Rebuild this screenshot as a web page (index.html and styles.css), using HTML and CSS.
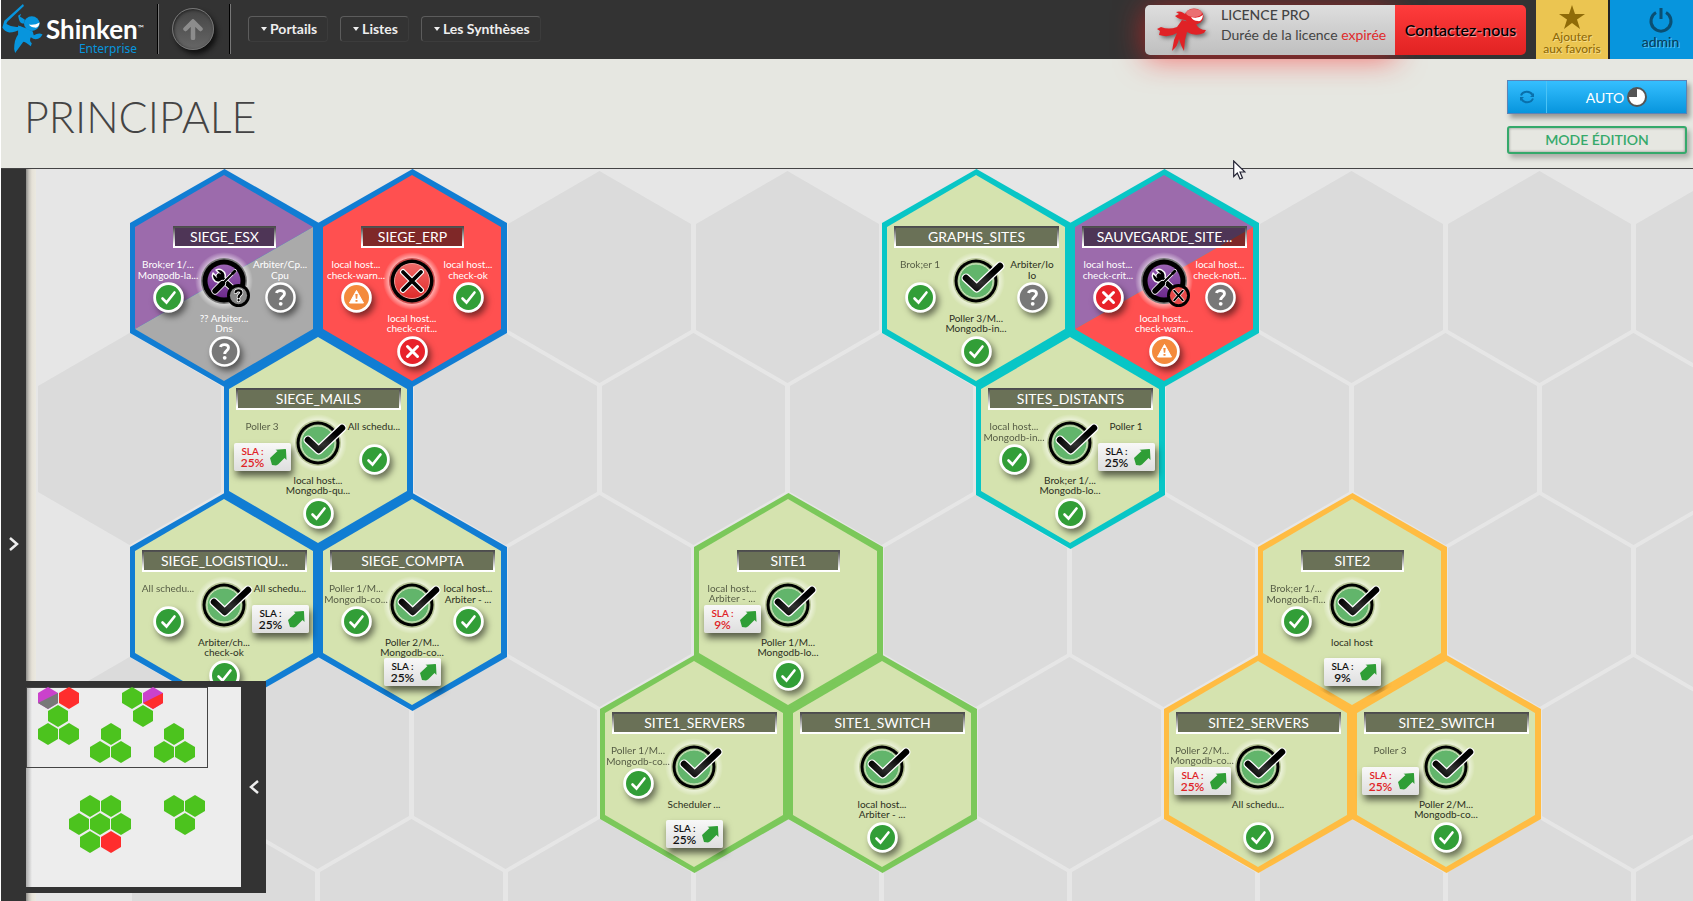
FILE: index.html
```html
<!DOCTYPE html>
<html lang="fr">
<head>
<meta charset="utf-8">
<title>Shinken Enterprise - Principale</title>
<link rel="stylesheet" href="styles.css">
</head>
<body>
<svg class="defs" aria-hidden="true">
  <defs>
    <radialGradient id="halo"><stop offset=".7" stop-color="#fff" stop-opacity=".75"/><stop offset="1" stop-color="#fff" stop-opacity="0"/></radialGradient>
    <radialGradient id="ink" cx=".45" cy=".75" r=".6"><stop offset="0" stop-color="#333"/><stop offset="1" stop-color="#000"/></radialGradient>
    <linearGradient id="red-disc" x1="0" y1="0" x2="0" y2="1"><stop offset="0" stop-color="#f06a68"/><stop offset="1" stop-color="#e02a2a"/></linearGradient>
    <linearGradient id="purple-disc" x1="0" y1="0" x2="0" y2="1"><stop offset="0" stop-color="#9a62b4"/><stop offset="1" stop-color="#6d2a8c"/></linearGradient>
  </defs>
  <symbol id="hex-base" viewBox="0 0 189 218"><path d="M94.5 0 189 54V164L94.5 218 0 164V54Z"/></symbol>
  <symbol id="hex-ok" viewBox="0 0 189 218"><use href="#hex-base"/><path fill="#d5e3af" d="M94 6 183 58V160L94 212 5 160V58Z"/></symbol>
  <symbol id="hex-critical" viewBox="0 0 189 218"><use href="#hex-base"/><path fill="#ff5050" d="M94 6 183 58V160L94 212 5 160V58Z"/></symbol>
  <symbol id="hex-down-unknown" viewBox="0 0 189 218"><use href="#hex-base"/><path fill="#9c6bac" d="M94 6 183 58 5 160V58Z"/><path fill="#aaa" d="M183 58V160L94 212 5 160Z"/></symbol>
  <symbol id="hex-down-critical" viewBox="0 0 189 218"><use href="#hex-base"/><path fill="#9c6bac" d="M94 6 183 58 5 160V58Z"/><path fill="#ff5050" d="M183 58V160L94 212 5 160Z"/></symbol>

  <symbol id="main-ok" viewBox="-30 -30 60 60">
    <circle r="29" fill="url(#halo)"/><circle r="23" fill="#b9c697"/><circle r="21.5"/><circle r="18.5" fill="#a5c58f"/>
    <circle r="17" fill="#62b56b" stroke="#cfe5c0" stroke-width="1"/>
    <path d="M-10-3 .7 7 24-15" fill="none" stroke="#fff" stroke-width="9" stroke-linecap="round" stroke-linejoin="round"/>
    <path d="M-10-3 .7 7 24-15" fill="none" stroke="url(#ink)" stroke-width="6.500" stroke-linecap="round" stroke-linejoin="round"/>
  </symbol>
  <symbol id="main-critical" viewBox="-30 -30 60 60">
    <circle r="29" fill="url(#halo)"/><circle r="23" fill="#c94a4a"/><circle r="21.5"/><circle r="17.5" fill="url(#red-disc)" stroke="#f29a98"/>
    <path d="M-9-9 9 9M9-9-9 9" stroke="#fff" stroke-width="6" stroke-linecap="round"/>
    <path d="M-9-9 9 9M9-9-9 9" stroke="#000" stroke-width="3.800" stroke-linecap="round"/>
  </symbol>
  <symbol id="main-tools" viewBox="-30 -30 60 60">
    <circle r="29" fill="url(#halo)"/><circle r="23" fill="#777"/><circle r="21.5"/><circle r="16.5" fill="url(#purple-disc)"/>
    <path d="M-5-5 9 8" stroke="#fff" stroke-width="6.500" stroke-linecap="round"/>
    <path d="M-11-8-7-4-4-7-8-11A6.500 6.500 0 1 1-11-8Z" stroke="#fff" stroke-width="1.500" stroke-linejoin="round"/>
    <path d="M-5-5 9 8" stroke="#000" stroke-width="5" stroke-linecap="round"/>
    <path d="M11-10 0 1" stroke="#fff" stroke-width="3.600" stroke-linecap="round"/>
    <path d="M-1.500 2.500-9 10" stroke="#fff" stroke-width="7" stroke-linecap="round"/>
    <path d="M11-10 0 1" stroke="#000" stroke-width="2" stroke-linecap="round"/>
    <path d="M11.500-10.500 8-7" stroke="#000" stroke-width="3"/>
    <path d="M-1.500 2.500-9 10" stroke="#000" stroke-width="5.400" stroke-linecap="round"/>
  </symbol>
  <symbol id="question" viewBox="-8 -9 16 18"><path d="M-4-4.500C-3.500-7.500 4-8 4-3.800 4-1 .2-.8.2 2.400" fill="none" stroke-width="2.800"/><circle cx=".2" cy="6.300" r="1.900" stroke="none"/></symbol>
  <symbol id="sub-unknown" viewBox="-12 -12 24 24"><circle r="12"/><circle r="9" fill="#888"/>
    <path d="M-3-3.500C-2.500-6 3-6.200 3-3 3-1 .1-.6.1 1.800M.1 4.800V5" fill="none" stroke="#fff" stroke-width="4" stroke-linecap="round"/>
    <path d="M-3-3.500C-2.500-6 3-6.200 3-3 3-1 .1-.6.1 1.800M.1 4.800V5" fill="none" stroke="#000" stroke-width="2.400" stroke-linecap="round"/></symbol>
  <symbol id="sub-critical" viewBox="-12 -12 24 24"><circle r="12"/><circle r="9" fill="#e84a4a"/><path d="M-4.500-5 4.500 5M4.500-5-4.500 5" stroke="#fff" stroke-width="3.200" stroke-linecap="round"/><path d="M-4.500-5 4.500 5M4.500-5-4.500 5" stroke="#000" stroke-width="2" stroke-linecap="round"/></symbol>

  <symbol id="ok" viewBox="-15.5 -15.5 31 31"><circle r="15.300" fill="#fff"/><circle r="12.500" fill="#329e37"/><path d="M-6 1-2 5 6-5" fill="none" stroke="#fff" stroke-width="2.600" stroke-linecap="round"/></symbol>
  <symbol id="unknown" viewBox="-15.5 -15.5 31 31"><circle r="15.300" fill="#fff"/><circle r="12.800" fill="#787878"/><use href="#question" x="-8" y="-9" width="16" height="18" fill="#fff" stroke="#fff"/></symbol>
  <symbol id="critical" viewBox="-15.5 -15.5 31 31"><circle r="15.300" fill="#fff"/><circle r="12.500" fill="#e8222a"/><path d="M-5-5 5 5M5-5-5 5" stroke="#fff" stroke-width="3" stroke-linecap="round"/></symbol>
  <symbol id="warning" viewBox="-15.5 -15.5 31 31"><circle r="15.300" fill="#fff"/><circle r="12.500" fill="#f48a3c"/><path d="M0-7 7 5.500H-7Z" fill="#fff" stroke="#fff" stroke-width="1" stroke-linejoin="round"/><path d="M-1.200-3.500H1.200L.7 1.200H-.7ZM-1 2.500H1V4.300H-1Z" fill="#f48a3c"/></symbol>
  <symbol id="trend" viewBox="0 0 17 17"><path fill="#2f9e36" d="M0 9 7.500 2 5.500.8 15.500 0Q16 0 16 1L16.500 11 14.500 9 8 15.500 6 16.500 2 16Z"/></symbol>
  <symbol id="ninja" viewBox="0 0 42 50">
    <path d="M22 0 3 17 1 24 4 23 6 18 23 2Z"/>
    <path d="M1 24 4 20Q12 25 20 23L21 25Q14 29 8 29 3 28 1 24Z"/>
    <path d="M18 16 17 12 20 10 19 13 21 14 24 16 23 20Q19 20 18 16Z"/>
    <ellipse cx="31" cy="20" rx="8" ry="7.500"/>
    <path d="M17 22Q24 24 32 28L33 32Q38 29 42 31L40 34Q35 38 30 34 28 38 31 40L30 43Q22 37 22 39L14 50 13 46Q13 36 17 31Z"/>
    <path class="eyes" d="M28 21Q34 22 39 19 38 25 34 24 30 24 28 21Z"/>
  </symbol>
  <symbol id="ninja-pro" viewBox="0 0 50 44">
    <path d="M30 8Q25 2 19 4L22 6 18 8Q22 12 30 12Z"/>
    <path d="M25 12 20 19Q12 22 4 19L0 21 3 23 2 27Q12 30 20 25L17 32 15 43Q21 38 22 31 24 38 27 43L28 32 30 24Q38 29 47 25L49 22Q42 22 39 16Z"/>
    <ellipse cx="37" cy="8.500" rx="9.500" ry="8"/>
    <path class="eyes" d="M34 9Q41 11 46 7 45 14 41 13 36 13 34 9Z"/>
    <ellipse class="gloss" cx="37" cy="5" rx="8" ry="4"/>
  </symbol>
  <symbol id="m" viewBox="0 0 20 22"><path d="M10 0 20 6V16L10 22 0 16V6Z"/></symbol>
</svg>

<header class="topbar">
  <a class="logo" href="#">
    <svg class="logo-mark"><use href="#ninja"/></svg>
    <span class="wordmark"><span class="brand">Shinken<sup>™</sup></span><span class="edition">Enterprise</span></span>
  </a>
  <div class="up-cell">
    <button class="up" type="button" aria-label="Remonter"><svg width="20" height="22" viewBox="0 0 20 22"><path d="M10 20V4M2.500 11 10 3.500 17.500 11" fill="none" stroke="#8c8c8c" stroke-width="4.500" stroke-linecap="round" stroke-linejoin="round"/></svg></button>
  </div>
  <nav class="menu">
    <button type="button">Portails</button>
    <button type="button">Listes</button>
    <button type="button">Les Synthèses</button>
  </nav>
  <div class="licence">
    <div class="licence-info">
      <svg class="pro"><use href="#ninja-pro"/></svg>
      <p><strong>LICENCE PRO</strong><br>Durée de la licence <em>expirée</em></p>
    </div>
    <button class="contact" type="button">Contactez-nous</button>
  </div>
  <button class="favorite" type="button">
    <svg width="26" height="24" viewBox="0 0 26 24"><path d="M13 0 16 9H26L18 14.500 21 24 13 18 5 24 8 14.500 0 9H10Z" fill="#8f6b08"/></svg>
    <span>Ajouter</span><span>aux favoris</span>
  </button>
  <button class="user" type="button">
    <svg width="26" height="28" viewBox="0 0 26 28"><path d="M8 6.500A10 10 0 1 0 18 6.500M13 2V13" fill="none" stroke="#0a4f73" stroke-width="3"/></svg>
    <span>admin</span>
  </button>
</header>

<section class="heading">
  <h1>PRINCIPALE</h1>
  <div class="actions">
    <div class="auto">
      <button class="refresh" type="button" aria-label="Rafraîchir"><svg width="16" height="16" viewBox="0 0 16 16"><path d="M2 6.500A6.200 5.500 0 0 1 13.500 6M14 9.500A6.200 5.500 0 0 1 2.500 10" fill="none" stroke="#0a70ab" stroke-width="2"/><path d="M15 4V8H11ZM1 12V8H5Z" fill="#0a70ab"/></svg></button>
      <button class="auto-toggle" type="button">AUTO <svg width="20" height="20" viewBox="0 0 20 20"><circle cx="10" cy="10" r="9" fill="#fff" stroke="#555" stroke-width="2"/><path d="M10 10V1A9 9 0 0 0 1 10Z" fill="#555"/></svg></button>
    </div>
    <button class="edit" type="button">MODE ÉDITION</button>
  </div>
  <svg class="cursor" width="13" height="20" viewBox="0 0 13 20"><path d="M.7 1V16.500L4.300 13 7 19 9.500 18 7 12H12Z" fill="#fff" stroke="#223" stroke-width="1.200"/></svg>
</section>

<main class="workspace">
  <aside class="drawer"><button type="button" aria-label="Ouvrir le panneau"><svg width="12" height="16" viewBox="0 0 12 16"><path d="M2 2 9 8 2 14" fill="none" stroke="#eee" stroke-width="2.500"/></svg></button></aside>
  <div class="map">
    <svg class="grid" width="100%" height="100%" aria-hidden="true">
      <defs>
        <pattern id="even" x="106" y="2" width="188" height="324" patternUnits="userSpaceOnUse"><path fill="#dbdbdb" d="M91.500 0 183 53V159L91.500 212 0 159V53Z"/></pattern>
        <pattern id="odd" x="12" y="164" width="188" height="324" patternUnits="userSpaceOnUse"><path fill="#dbdbdb" d="M91.500 0 183 53V159L91.500 212 0 159V53Z"/></pattern>
      </defs>
      <rect x="106" y="0" width="100%" height="100%" fill="url(#even)"/>
      <rect x="12" y="164" width="100%" height="100%" fill="url(#odd)"/>
    </svg>

    <article class="node blue light" style="--col:0;--row:0">
      <svg class="hex"><use href="#hex-down-unknown"/></svg>
      <h2 class="short">SIEGE_ESX</h2>
      <svg class="state"><use href="#main-tools"/></svg><svg class="sub"><use href="#sub-unknown"/></svg>
      <a class="slot left"><span>Brok;er 1/...<br>Mongodb-la...</span><svg><use href="#ok"/></svg></a>
      <a class="slot right"><span>Arbiter/Cp...<br>Cpu</span><svg><use href="#unknown"/></svg></a>
      <a class="slot bottom"><span>?? Arbiter...<br>Dns</span><svg><use href="#unknown"/></svg></a>
    </article>

    <article class="node blue light" style="--col:2;--row:0">
      <svg class="hex"><use href="#hex-critical"/></svg>
      <h2 class="short">SIEGE_ERP</h2>
      <svg class="state"><use href="#main-critical"/></svg>
      <a class="slot left"><span>local host...<br>check-warn...</span><svg><use href="#warning"/></svg></a>
      <a class="slot right"><span>local host...<br>check-ok</span><svg><use href="#ok"/></svg></a>
      <a class="slot bottom"><span>local host...<br>check-crit...</span><svg><use href="#critical"/></svg></a>
    </article>

    <article class="node blue" style="--col:1;--row:1">
      <svg class="hex"><use href="#hex-ok"/></svg>
      <h2>SIEGE_MAILS</h2>
      <svg class="state"><use href="#main-ok"/></svg>
      <a class="slot left with-sla"><span>Poller 3</span><b class="sla missed"><i>SLA :<br><strong>25%</strong></i><svg><use href="#trend"/></svg></b></a>
      <a class="slot right"><span>All schedu...</span><svg><use href="#ok"/></svg></a>
      <a class="slot bottom"><span>local host...<br>Mongodb-qu...</span><svg><use href="#ok"/></svg></a>
    </article>

    <article class="node blue" style="--col:0;--row:2">
      <svg class="hex"><use href="#hex-ok"/></svg>
      <h2>SIEGE_LOGISTIQU...</h2>
      <svg class="state"><use href="#main-ok"/></svg>
      <a class="slot left"><span>All schedu...</span><svg><use href="#ok"/></svg></a>
      <a class="slot right with-sla"><span>All schedu...</span><b class="sla"><i>SLA :<br><strong>25%</strong></i><svg><use href="#trend"/></svg></b></a>
      <a class="slot bottom"><span>Arbiter/ch...<br>check-ok</span><svg><use href="#ok"/></svg></a>
    </article>

    <article class="node blue" style="--col:2;--row:2">
      <svg class="hex"><use href="#hex-ok"/></svg>
      <h2>SIEGE_COMPTA</h2>
      <svg class="state"><use href="#main-ok"/></svg>
      <a class="slot left"><span>Poller 1/M...<br>Mongodb-co...</span><svg><use href="#ok"/></svg></a>
      <a class="slot right"><span>local host...<br>Arbiter - ...</span><svg><use href="#ok"/></svg></a>
      <a class="slot bottom with-sla"><span>Poller 2/M...<br>Mongodb-co...</span><b class="sla"><i>SLA :<br><strong>25%</strong></i><svg><use href="#trend"/></svg></b></a>
    </article>

    <article class="node cyan" style="--col:8;--row:0">
      <svg class="hex"><use href="#hex-ok"/></svg>
      <h2>GRAPHS_SITES</h2>
      <svg class="state"><use href="#main-ok"/></svg>
      <a class="slot left"><span>Brok;er 1</span><svg><use href="#ok"/></svg></a>
      <a class="slot right"><span>Arbiter/Io<br>Io</span><svg><use href="#unknown"/></svg></a>
      <a class="slot bottom"><span>Poller 3/M...<br>Mongodb-in...</span><svg><use href="#ok"/></svg></a>
    </article>

    <article class="node cyan light" style="--col:10;--row:0">
      <svg class="hex"><use href="#hex-down-critical"/></svg>
      <h2>SAUVEGARDE_SITE...</h2>
      <svg class="state"><use href="#main-tools"/></svg><svg class="sub"><use href="#sub-critical"/></svg>
      <a class="slot left"><span>local host...<br>check-crit...</span><svg><use href="#critical"/></svg></a>
      <a class="slot right"><span>local host...<br>check-noti...</span><svg><use href="#unknown"/></svg></a>
      <a class="slot bottom"><span>local host...<br>check-warn...</span><svg><use href="#warning"/></svg></a>
    </article>

    <article class="node cyan" style="--col:9;--row:1">
      <svg class="hex"><use href="#hex-ok"/></svg>
      <h2>SITES_DISTANTS</h2>
      <svg class="state"><use href="#main-ok"/></svg>
      <a class="slot left"><span>local host...<br>Mongodb-in...</span><svg><use href="#ok"/></svg></a>
      <a class="slot right with-sla"><span>Poller 1</span><b class="sla"><i>SLA :<br><strong>25%</strong></i><svg><use href="#trend"/></svg></b></a>
      <a class="slot bottom"><span>Brok;er 1/...<br>Mongodb-lo...</span><svg><use href="#ok"/></svg></a>
    </article>

    <article class="node green" style="--col:6;--row:2">
      <svg class="hex"><use href="#hex-ok"/></svg>
      <h2 class="short">SITE1</h2>
      <svg class="state"><use href="#main-ok"/></svg>
      <a class="slot left with-sla"><span>local host...<br>Arbiter - ...</span><b class="sla missed"><i>SLA :<br><strong>9%</strong></i><svg><use href="#trend"/></svg></b></a>
      <a class="slot bottom"><span>Poller 1/M...<br>Mongodb-lo...</span><svg><use href="#ok"/></svg></a>
    </article>

    <article class="node green" style="--col:5;--row:3">
      <svg class="hex"><use href="#hex-ok"/></svg>
      <h2>SITE1_SERVERS</h2>
      <svg class="state"><use href="#main-ok"/></svg>
      <a class="slot left"><span>Poller 1/M...<br>Mongodb-co...</span><svg><use href="#ok"/></svg></a>
      <a class="slot bottom with-sla"><span>Scheduler ...</span><b class="sla"><i>SLA :<br><strong>25%</strong></i><svg><use href="#trend"/></svg></b></a>
    </article>

    <article class="node green" style="--col:7;--row:3">
      <svg class="hex"><use href="#hex-ok"/></svg>
      <h2>SITE1_SWITCH</h2>
      <svg class="state"><use href="#main-ok"/></svg>
      <a class="slot bottom"><span>local host...<br>Arbiter - ...</span><svg><use href="#ok"/></svg></a>
    </article>

    <article class="node orange" style="--col:12;--row:2">
      <svg class="hex"><use href="#hex-ok"/></svg>
      <h2 class="short">SITE2</h2>
      <svg class="state"><use href="#main-ok"/></svg>
      <a class="slot left"><span>Brok;er 1/...<br>Mongodb-fl...</span><svg><use href="#ok"/></svg></a>
      <a class="slot bottom with-sla"><span>local host</span><b class="sla"><i>SLA :<br><strong>9%</strong></i><svg><use href="#trend"/></svg></b></a>
    </article>

    <article class="node orange" style="--col:11;--row:3">
      <svg class="hex"><use href="#hex-ok"/></svg>
      <h2>SITE2_SERVERS</h2>
      <svg class="state"><use href="#main-ok"/></svg>
      <a class="slot left with-sla"><span>Poller 2/M...<br>Mongodb-co...</span><b class="sla missed"><i>SLA :<br><strong>25%</strong></i><svg><use href="#trend"/></svg></b></a>
      <a class="slot bottom"><span>All schedu...</span><svg><use href="#ok"/></svg></a>
    </article>

    <article class="node orange" style="--col:13;--row:3">
      <svg class="hex"><use href="#hex-ok"/></svg>
      <h2>SITE2_SWITCH</h2>
      <svg class="state"><use href="#main-ok"/></svg>
      <a class="slot left with-sla"><span>Poller 3</span><b class="sla missed"><i>SLA :<br><strong>25%</strong></i><svg><use href="#trend"/></svg></b></a>
      <a class="slot bottom"><span>Poller 2/M...<br>Mongodb-co...</span><svg><use href="#ok"/></svg></a>
    </article>

    <div class="minimap">
      <svg class="overview" viewBox="0 0 215 200" fill="#4cc31e">
        <rect x=".5" y=".5" width="181" height="80" fill="none" stroke="#444"/>
        <g fill="#ca42cc"><use href="#m" x="12" y="0" width="20" height="22"/><use href="#m" x="117" y="0" width="20" height="22"/></g>
        <path d="M32 6V16L22 22 12 16Z" fill="#787878"/><path d="M137 6V16L127 22 117 16Z" fill="#ff2d2d"/>
        <g fill="#ff2d2d"><use href="#m" x="33" y="0" width="20" height="22"/><use href="#m" x="75" y="144" width="20" height="22"/></g>
        <use href="#m" x="22" y="18" width="20" height="22"/><use href="#m" x="12" y="36" width="20" height="22"/><use href="#m" x="33" y="36" width="20" height="22"/>
        <use href="#m" x="96" y="0" width="20" height="22"/><use href="#m" x="107" y="18" width="20" height="22"/>
        <use href="#m" x="75" y="36" width="20" height="22"/><use href="#m" x="64" y="54" width="20" height="22"/><use href="#m" x="85" y="54" width="20" height="22"/>
        <use href="#m" x="138" y="36" width="20" height="22"/><use href="#m" x="128" y="54" width="20" height="22"/><use href="#m" x="149" y="54" width="20" height="22"/>
        <use href="#m" x="54" y="108" width="20" height="22"/><use href="#m" x="75" y="108" width="20" height="22"/>
        <use href="#m" x="43" y="126" width="20" height="22"/><use href="#m" x="64" y="126" width="20" height="22"/><use href="#m" x="85" y="126" width="20" height="22"/><use href="#m" x="54" y="144" width="20" height="22"/>
        <use href="#m" x="138" y="108" width="20" height="22"/><use href="#m" x="159" y="108" width="20" height="22"/><use href="#m" x="149" y="126" width="20" height="22"/>
      </svg>
      <button type="button" aria-label="Réduire la vue d'ensemble"><svg width="12" height="16" viewBox="0 0 12 16"><path d="M10 2 3 8 10 14" fill="none" stroke="#eee" stroke-width="2.500"/></svg></button>
    </div>
  </div>
</main>
</body>
</html>
```

FILE: styles.css
```css
* { box-sizing: border-box; }

body {
  margin: 0;
  padding-left: 1px;
  height: 100vh;
  display: flex;
  flex-direction: column;
  overflow: hidden;
  background: #fff;
  font-family: Lato, "Open Sans", sans-serif;
  color: #444;
}

button {
  margin: 0;
  padding: 0;
  border: 0;
  background: none;
  font: inherit;
  color: inherit;
  cursor: pointer;
}

svg { display: block; }
h1, h2, p { margin: 0; }
em, i { font-style: normal; }
.defs { position: absolute; width: 0; height: 0; }

/* Top bar */
.topbar {
  flex: none;
  display: flex;
  align-items: stretch;
  height: 59px;
  background: #333;
  position: relative;
  z-index: 2;
}
.logo {
  display: flex;
  align-items: flex-start;
  width: 157px;
  padding-top: 4px;
  text-decoration: none;
}
.logo-mark { width: 42px; height: 49px; fill: #0795dd; }
.eyes { fill: #fff; }
.gloss { fill: #fff; opacity: .35; }
.wordmark { display: flex; flex-direction: column; width: 100px; margin-left: 3px; padding-top: 12px; }
.brand { font-size: 26px; line-height: 26px; font-weight: 700; color: #fff; white-space: nowrap; }
.brand sup { font-size: 8px; line-height: 8px; vertical-align: 8px; font-weight: 400; }
.edition { align-self: flex-end; margin-right: 9px; font: 12px/14px "Noto Sans", sans-serif; color: #0795dd; }
.up-cell {
  width: 72px;
  height: 50px;
  margin-top: 4px;
  padding-right: 2px;
  display: flex;
  align-items: center;
  justify-content: center;
  border-left: 1px solid #777;
  border-right: 1px solid #000;
  box-shadow: -1px 0 #000, 1px 0 #777;
}
.up {
  display: flex;
  align-items: center;
  justify-content: center;
  width: 42px;
  height: 42px;
  border-radius: 50%;
  border: 1px solid #777;
  background: linear-gradient(#444, #666);
  box-shadow: 3px 4px 5px #111, inset 1px 1px 3px #222;
}
.menu { display: flex; align-items: center; gap: 12px; padding: 0 0 2px 18px; }
.menu button {
  height: 26px;
  padding: 0 10px 0 12px;
  border: 1px solid #3c3c3c;
  border-top-color: #5c5c5c;
  border-left-color: #5c5c5c;
  border-radius: 4px;
  font-size: 14px;
  font-weight: 700;
  color: #eee;
}
.menu button::before {
  content: "";
  display: inline-block;
  margin-right: 3px;
  vertical-align: 3px;
  border: 3px solid transparent;
  border-top: 4px solid #eee;
  border-bottom: 0;
}
.licence {
  display: flex;
  height: 50px;
  margin: 5px 10px 0 auto;
  border-radius: 5px;
}
.licence-info {
  display: flex;
  align-items: center;
  width: 250px;
  padding-left: 12px;
  gap: 14px;
  border-radius: 5px 0 0 5px;
  background: linear-gradient(#dedede, #bfbfbf);
  box-shadow: 0 4px 30px rgba(255, 30, 30, .6);
  font-size: 14px;
  line-height: 20px;
  white-space: nowrap;
}
.licence-info p { padding-bottom: 10px; }
.licence-info strong { font-weight: 500; }
.licence-info em { color: #e02a2a; }
.pro { width: 50px; height: 44px; fill: #e02226; filter: drop-shadow(2px 2px 2px rgba(0, 0, 0, .5)); }
.contact {
  position: relative;
  width: 131px;
  padding-bottom: 2px;
  border-radius: 0 5px 5px 0;
  background: linear-gradient(#ff3c3c, #e12222);
  font-size: 16px;
  font-weight: 600;
  color: #000;
  text-shadow: 1px 1px 1px rgba(255, 255, 255, .6);
}
.favorite {
  width: 74px;
  padding-top: 5px;
  display: flex;
  flex-direction: column;
  align-items: center;
  border-right: 2px solid #222;
  background: #ebc551;
  font-size: 12px;
  line-height: 12px;
  font-weight: 500;
  color: #8f6b08;
  text-shadow: 1px 1px #f6dc8a;
}
.favorite svg { margin-bottom: 2px; }
.user {
  width: 83px;
  padding: 6px 0 0 18px;
  display: flex;
  flex-direction: column;
  align-items: center;
  background: #0795dd;
  font-size: 14px;
  line-height: 16px;
  font-weight: 500;
  color: #0a3f5c;
  text-shadow: 1px 1px #4fc0f3;
}

/* Page heading */
.heading {
  flex: none;
  position: relative;
  display: flex;
  justify-content: space-between;
  height: 110px;
  padding: 21px 6px 0 23px;
  border-bottom: 1px solid #444;
  background: #e6e7e1;
}
.heading h1 { padding-top: 12px; font-size: 43px; line-height: 50px; font-weight: 300; }
.actions { display: flex; flex-direction: column; gap: 12px; width: 180px; }
.auto {
  display: flex;
  height: 34px;
  border: 1px solid #5d83b5;
  background: linear-gradient(#35bfff, #0795dd);
  box-shadow: 3px 4px 5px rgba(0, 0, 0, .35);
}
.refresh { width: 39px; display: flex; align-items: center; justify-content: center; border-right: 1px solid #4cc3f5; }
.auto-toggle { flex: 1; display: flex; align-items: center; justify-content: center; gap: 3px; font-size: 14px; color: #fff; }
.edit {
  height: 28px;
  padding-bottom: 2px;
  border: 2px solid #35a96b;
  border-radius: 3px;
  background: #e6e7e1;
  box-shadow: 3px 4px 5px rgba(0, 0, 0, .25), inset 0 0 3px rgba(0, 0, 0, .4);
  font-size: 14px;
  font-weight: 600;
  color: #35a96b;
}
.cursor { position: absolute; left: 1232px; top: 101px; z-index: 3; }

/* Workspace */
.workspace { flex: 1; display: flex; min-height: 0; }
.drawer { flex: none; width: 25px; display: flex; background: #333; }
.drawer button { flex: 1; display: flex; align-items: center; justify-content: center; padding-top: 18px; }
.map { flex: 1; position: relative; overflow: hidden; background: #e6e6e6; }
.map::before {
  content: "";
  position: absolute;
  inset: 0 auto 0 0;
  width: 10px;
  background: linear-gradient(to right, #8c8b88, #c9c6be 30%, #e6e2d8 60%, #ebe9e0);
}
.grid { position: absolute; inset: 0; }

/* Hexagon nodes: columns are counted in half hexagons */
.node {
  position: absolute;
  left: calc(104px + var(--col) * 94px);
  top: calc(var(--row) * 162px);
  width: 189px;
  height: 218px;
  color: #2c3022;
}
.node.light { color: #fff; }
.blue { fill: #117dd3; }
.cyan { fill: #08c6c6; }
.green { fill: #7bc85a; }
.orange { fill: #ffbc42; }
.hex { position: absolute; inset: 0; width: 189px; height: 218px; }
.node h2 {
  position: absolute;
  top: 57px;
  left: 12px;
  right: 12px;
  height: 22px;
  border: 2px solid;
  border-image: linear-gradient(#4a4a4a, #aaa 45%, #fff 90%) 1;
  background: rgba(0, 0, 0, .5);
  background-clip: padding-box;
  font-size: 14px;
  line-height: 17px;
  font-weight: 400;
  text-align: center;
  color: #fff;
}
.node h2.short { left: 43px; right: 43px; }
.state { position: absolute; left: 64px; top: 82px; width: 60px; height: 60px; fill: #000; }
.sub { position: absolute; left: 97px; top: 115px; width: 23px; height: 23px; fill: #000; }
.slot {
  position: absolute;
  display: flex;
  flex-direction: column;
  align-items: center;
  width: 64px;
  font-size: 10px;
  line-height: 11px;
  text-align: center;
  white-space: nowrap;
}
.slot > span { height: 23px; }
.slot > svg { width: 31px; height: 31px; filter: drop-shadow(3px 4px 3px rgba(0, 0, 0, .5)); }
.slot.left { left: 6px; top: 90px; }
.slot.right { left: 118px; top: 90px; }
.slot.bottom { left: 62px; top: 144px; line-height: 10px; }
.node:not(.light) .slot.left > span { opacity: .75; }
.with-sla > span { height: 22px; }
.with-sla.left, .with-sla.right { line-height: 10px; }
.slot.bottom.with-sla > span { height: 21px; }
.sla {
  display: flex;
  align-items: center;
  justify-content: space-between;
  width: 57px;
  height: 28px;
  padding: 0 4px 0 6px;
  border-radius: 2px;
  background: linear-gradient(#f8f8f8, #dedede);
  box-shadow: 2px 5px 7px rgba(0, 0, 0, .6);
  font-size: 10px;
  line-height: 11px;
  font-weight: 600;
  color: #111;
}
.sla i { width: 26px; }
.sla strong { font-size: 12px; font-weight: 600; }
.sla svg { width: 17px; height: 17px; }
.sla.missed { color: #e02226; }

/* Overview */
.minimap {
  position: absolute;
  left: 0;
  bottom: 8px;
  display: flex;
  width: 240px;
  height: 212px;
  border: solid #333;
  border-width: 6px 0;
  background: #333;
}
.overview { width: 215px; height: 200px; background: linear-gradient(to right, #aaa, #ededed 6px); }
.minimap button { flex: 1; display: flex; align-items: center; justify-content: center; }
```
